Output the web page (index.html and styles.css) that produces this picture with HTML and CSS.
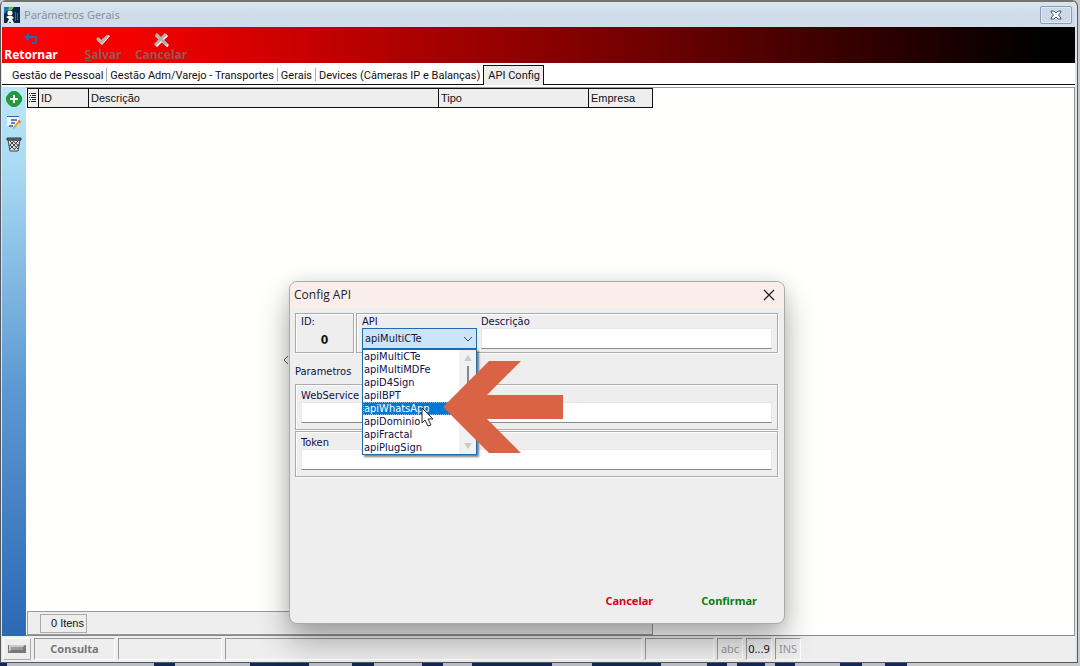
FILE: index.html
```html
<!DOCTYPE html>
<html lang="pt-BR">
<head>
<meta charset="utf-8">
<title>Parâmetros Gerais</title>
<link rel="stylesheet" href="styles.css">
</head>
<body>
<div class="window">
  <header class="titlebar">
    <svg class="app-icon" width="16" height="16" viewBox="0 0 16 16">
      <rect width="16" height="16" fill="#082848"/>
      <path d="M0 0h8l-3 4H3L0 7z" fill="#1f78b8"/>
      <path d="M5 0h5l-2 3H4z" fill="#6cc04a"/>
      <circle cx="6" cy="6" r="2.6" fill="#fff"/>
      <path d="M3 16l2-4-3-2 2-1h4l2 2-2 1 2 4H7l-1-2-1 2z" fill="#fff"/>
      <path d="M11 5h1v9h-1zM13 6h1v7h-1z" fill="#4a6a86"/>
    </svg>
    <h1 class="title">Parâmetros Gerais</h1>
    <button class="win-close" aria-label="Fechar janela">
      <svg width="12" height="10" viewBox="0 0 12 10"><path d="M1 1h3l2 2 2-2h3v1L8.500 5 11 8v1H8L6 7 4 9H1V8l2.500-3L1 2z" fill="#fff" stroke="#4a5264"/></svg>
    </button>
  </header>

  <nav class="toolbar">
    <button class="tool tool-on">
      <svg width="16" height="14" viewBox="0 0 16 14"><path d="M6 0L1 4l5 4V5h6v4H9v2h3l2-2V4l-1-1H6z" fill="#2467b4"/><path d="M2 10h6v1H2z" fill="#b02040"/></svg>
      <span>Retornar</span>
    </button>
    <button class="tool tool-save" disabled>
      <svg width="16" height="14" viewBox="0 0 16 14"><path d="M2 7l2-2 3 3 6-6 2 1-8 9z" fill="#fff"/><path d="M1 6l2-2 3 3 6-5 2 1-7 8z" fill="#b9b4b2"/></svg>
      <span><u>S</u>alvar</span>
    </button>
    <button class="tool" disabled>
      <svg width="16" height="14" viewBox="0 0 16 14"><path d="M3 2l12 11M14 2L3 13" stroke="#fff" stroke-width="3"/><path d="M3 1l11 11M13 1L2 12" stroke="#b5afae" stroke-width="3"/></svg>
      <span>Cancelar</span>
    </button>
  </nav>

  <div class="tabs" role="tablist">
    <button class="tab" role="tab">Gestão de Pessoal</button>
    <button class="tab" role="tab">Gestão Adm/Varejo - Transportes</button>
    <button class="tab" role="tab">Gerais</button>
    <button class="tab" role="tab">Devices (Câmeras IP e Balanças)</button>
    <button class="tab tab-active" role="tab" aria-selected="true">API Config</button>
  </div>

  <main class="workspace">
    <aside class="sidebar">
      <button class="side-btn" aria-label="Adicionar">
        <svg width="16" height="16" viewBox="0 0 16 16"><path d="M6 0h4l3 2 3 4v4l-3 4-3 2H6l-3-2-3-4V6l3-4z" fill="#23983f"/><path d="M8 4v8M4 8h8" stroke="#fff" stroke-width="2"/></svg>
      </button>
      <button class="side-btn" aria-label="Editar">
        <svg width="16" height="16" viewBox="0 0 16 16"><path d="M1 2h12v10H1z" fill="#eef5fb"/><path d="M1 2h12v1H1z" fill="#2c62b0"/><path d="M5 6h6M5 9h4M3 12h4" stroke="#2c62b0" stroke-width="1.500"/><path d="M13 6l2 2-6 6-2 1 0-2z" fill="#f2a52b"/><path d="M13 6l2 2-1 1-2-2z" fill="#e0603a"/></svg>
      </button>
      <button class="side-btn" aria-label="Excluir">
        <svg width="16" height="16" viewBox="0 0 16 16"><path d="M2 3h12l-2 11H4z" fill="#d8dee2" stroke="#444"/><path d="M1 1h14v2H1z" fill="#777" stroke="#333"/><path d="M4 4l8 8M4 8l5 5M7 4l6 5M12 4l-8 8M13 7l-5 6M8 4l-5 5" stroke="#444"/></svg>
      </button>
    </aside>
    <section class="content">
      <table class="grid">
        <colgroup><col class="c-mark"><col class="c-id"><col class="c-desc"><col class="c-type"><col class="c-company"></colgroup>
        <thead><tr>
          <th class="mark"><svg width="9" height="12" viewBox="0 0 9 12"><path d="M1 1.500h1M3 1.500h5M2 3.500h1M4 3.500h4M1 5.500h1M3 5.500h5M2 7.500h1M4 7.500h4M1 9.500h1M3 9.500h5" stroke="#222"/></svg></th>
          <th>ID</th><th>Descrição</th><th>Tipo</th><th>Empresa</th>
        </tr></thead>
      </table>
      <div class="grid-footer"><span class="count">0 Itens</span></div>
    </section>
  </main>

  <footer class="status">
    <span class="cell cell-icon"><svg width="18" height="10" viewBox="0 0 18 10"><path d="M0 1h18v8H0z" fill="#777"/><path d="M1 1h16L15 3H3v3L1 8z" fill="#ccc"/><path d="M3 3h12v3H3z" fill="#999"/></svg></span>
    <span class="cell cell-mode">Consulta</span>
    <span class="cell cell-a"></span>
    <span class="cell cell-b"></span>
    <span class="cell cell-c"></span>
    <span class="cell cell-key">abc</span>
    <span class="cell cell-key key-on">0...9</span>
    <span class="cell cell-key">INS</span>
  </footer>
</div>
<div class="desktop"></div>

<button class="splitter" aria-label="Recolher">
  <svg width="6" height="8" viewBox="0 0 6 8"><path d="M5 0L1 4l4 4" fill="none" stroke="#555"/></svg>
</button>

<form class="dialog" role="dialog" aria-labelledby="dlg-title">
  <header class="dialog-head">
    <h2 class="dialog-title" id="dlg-title">Config API</h2>
    <button type="button" class="dialog-close" aria-label="Fechar"><svg width="12" height="12" viewBox="0 0 12 12"><path d="M1 1l10 10M11 1L1 11" stroke="#222" stroke-width="1.300"/></svg></button>
  </header>
  <div class="dialog-body">
    <div class="row">
      <div class="box id-box"><span>ID:</span><output class="id-value">0</output></div>
      <div class="box api-box">
        <div class="field api-field">
          <label for="api">API</label>
          <select id="api"><option>apiMultiCTe</option></select>
          <svg class="chevron" width="10" height="6" viewBox="0 0 10 6"><path d="M1 1l4 4 4-4" fill="none" stroke="#444"/></svg>
          <div class="dropdown">
            <ul class="options" role="listbox">
              <li>apiMultiCTe</li><li>apiMultiMDFe</li><li>apiD4Sign</li><li>apiIBPT</li>
              <li class="chosen">apiWhatsApp</li><li>apiDominio</li><li>apiFractal</li><li>apiPlugSign</li>
            </ul>
            <div class="scroll"><i class="arrow-up"></i><i class="thumb"></i><i class="arrow-down"></i></div>
          </div>
        </div>
        <div class="field desc-field">
          <label for="desc">Descrição</label>
          <input id="desc" type="text">
        </div>
      </div>
    </div>
    <h3 class="section">Parametros</h3>
    <div class="box field param"><label for="ws">WebService</label><input id="ws" type="text"></div>
    <div class="box field param"><label for="token">Token</label><input id="token" type="text"></div>
  </div>
  <footer class="dialog-foot">
    <button type="button" class="action cancel">Cancelar</button>
    <button type="button" class="action confirm">Confirmar</button>
  </footer>
  <svg class="pointer-arrow" width="120" height="92" viewBox="0 0 120 92"><path d="M0 46L46 0h32L44 34h76v24H44l34 34H46z" fill="#d96445"/></svg>
  <svg class="cursor" width="13" height="20" viewBox="0 0 13 20"><path d="M1 1v15l3-3 3 6 3-1-3-6h5z" fill="#fff" stroke="#222"/></svg>
</form>
</body>
</html>
```

FILE: styles.css
```css
* { box-sizing: border-box; }

body {
  margin: 0;
  height: 100vh;
  display: flex;
  flex-direction: column;
  overflow: hidden;
  position: relative;
  background: #c9cacb;
  font: 11px/13px "Liberation Sans", Arial, sans-serif;
  color: #111;
}

button { font: inherit; border: 0; padding: 0; background: none; color: inherit; }
h1, h2, h3, ul { margin: 0; padding: 0; font-weight: normal; list-style: none; }
svg { display: block; }

.window {
  flex: 1;
  min-height: 0;
  display: flex;
  flex-direction: column;
  margin-right: 2px;
  padding: 0 2px 0 1px;
  border: 1px solid #55585d;
  border-top: 2px solid #73766f;
  border-radius: 6px 6px 0 0;
  background: #dce5ef;
}

.titlebar {
  height: 25px;
  flex: none;
  display: flex;
  align-items: center;
  gap: 4px;
  padding: 1px 3px 0 2px;
  background: linear-gradient(#dce6ee, #cddbea 50%, #d0deeb);
}

.title {
  flex: 1;
  font: 11px/16px "Noto Sans", sans-serif;
  color: #8b929b;
}

.win-close {
  width: 32px;
  height: 18px;
  display: grid;
  place-items: center;
  border: 1px solid #8d9db8;
  border-radius: 2px;
  background: #cbd9ea;
  box-shadow: inset 0 0 0 1px #dde8f4;
}

.toolbar {
  height: 36px;
  flex: none;
  display: flex;
  padding-top: 6px;
  background: linear-gradient(90deg, #f00 0, #f40000 12%, #700000 60%, #000 97%);
}

.tool {
  width: 58px;
  display: flex;
  flex-direction: column;
  align-items: center;
  font: bold 12px/15px "Noto Sans", sans-serif;
  color: #985854;
}
.tool-on { color: #fff; }
.tool-save { margin-left: 14px; }

.tabs {
  flex: none;
  height: 22px;
  display: flex;
  align-items: flex-end;
  padding: 2px 0 0 6px;
  background: #fff;
  box-shadow: inset 0 -1px #111;
  font-family: Roboto, sans-serif;
}

.tab { height: 20px; padding: 0 3px 0 4px; white-space: nowrap; position: relative; }
.tab + .tab::before {
  content: "";
  position: absolute;
  left: 0;
  top: 3px;
  height: 13px;
  border-left: 1px solid #aaa;
}
.tab-active {
  border: 1px solid #111;
  border-bottom: 0;
  background: #eee;
}
.tabs .tab-active::before { display: none; }

.workspace {
  flex: 1;
  min-height: 0;
  display: flex;
  padding-top: 2px;
  background: #fff;
}

.sidebar {
  width: 24px;
  padding: 4px 1px 0 0;
  display: flex;
  flex-direction: column;
  align-items: center;
  gap: 7px;
  background: linear-gradient(#b9e8f7, #a9daf2 15%, #5c98d2 55%, #2c69b5);
}

.content {
  flex: 1;
  display: flex;
  flex-direction: column;
  padding-left: 1px;
  border-top: 1px solid #999;
  border-right: 1px solid #999;
  border-bottom: 1px solid #888;
  background: #fffffe;
}

.grid {
  width: 626px;
  table-layout: fixed;
  border-collapse: collapse;
}
.c-mark { width: 11px; }
.c-id { width: 50px; }
.c-desc { width: 350px; }
.c-type { width: 150px; }
.c-company { width: 64px; }
.grid th {
  height: 19px;
  padding: 1px 2px 0;
  border: 1px solid #111;
  background: #eee;
  text-align: left;
  font-weight: normal;
}
.grid .mark { padding: 0; }

.grid-footer {
  width: 626px;
  margin-top: auto;
  padding: 2px 0 1px 12px;
  border: 1px solid #999;
  background: #eee;
}
.count {
  display: block;
  width: 47px;
  padding: 2px;
  border: 1px solid #aaa;
  text-align: right;
}

.status {
  flex: none;
  height: 26px;
  display: flex;
  gap: 3px;
  padding: 2px 1px;
  background: #eee;
  font: 11px/20px "Noto Sans", sans-serif;
  color: #999;
}
.cell {
  border: 1px solid #fff;
  border-top-color: #999;
  border-left-color: #999;
  text-align: center;
  overflow: hidden;
}
.cell-icon {
  width: 28px;
  display: grid;
  place-items: center;
  border-color: #fff #aaa #aaa #fff;
}
.cell-mode { width: 81px; font-weight: bold; color: #777; }
.cell-a { width: 104px; }
.cell-b { width: 417px; }
.cell-c { width: 69px; }
.cell-key { width: 26px; }
.key-on { color: #111; }

.desktop {
  flex: none;
  height: 3px;
  background: linear-gradient(90deg,
    #12285a 0 7px, #b9bec7 7px 154px, #12285a 154px 175px, #b9bec7 175px 250px,
    #12285a 250px 309px, #b9bec7 309px 352px, #12285a 352px 374px, #b9bec7 374px 422px,
    #12285a 422px 443px, #b9bec7 443px 472px, #12285a 472px 552px, #b9bec7 552px 592px,
    #12285a 592px 661px, #b9bec7 661px 707px, #12285a 707px 727px, #b9bec7 727px 737px,
    #12285a 737px 765px, #b9bec7 765px 775px, #12285a 775px 795px, #b9bec7 795px 840px,
    #12285a 840px 862px, #b9bec7 862px 885px, #12285a 885px 907px, #c9cacb 907px);
}

.splitter { position: absolute; left: 283px; top: 356px; }

.dialog {
  position: absolute;
  left: 289px;
  top: 281px;
  width: 496px;
  min-height: 343px;
  display: flex;
  flex-direction: column;
  border: 1px solid #aaa;
  border-radius: 8px;
  background: #eee;
  box-shadow: 0 18px 32px rgba(0, 0, 0, 0.3), 0 0 16px rgba(0, 0, 0, 0.1);
  font: 11px/13px "DejaVu Sans Condensed", "DejaVu Sans", sans-serif;
  color: #10104a;
}

.dialog-head {
  height: 26px;
  display: flex;
  align-items: center;
  justify-content: space-between;
  padding: 0 9px 0 4px;
  border-radius: 7px 7px 0 0;
  background: #faeeeb;
}
.dialog-title { font: 12px/16px "Open Sans", sans-serif; color: #222; }

.dialog-body { padding: 5px 6px 0 5px; }
.row { display: flex; gap: 2px; }

.box {
  border: 1px solid #aaa;
  box-shadow: inset 1px 1px #fff, 1px 1px #fff;
}
.id-box {
  width: 59px;
  height: 40px;
  padding: 1px 5px;
  display: flex;
  flex-direction: column;
  gap: 6px;
}
.id-value { font-weight: bold; font-size: 12px; text-align: center; color: #111; }

.api-box { flex: 1; display: flex; gap: 4px; padding: 1px 5px 0; }
.field { display: flex; flex-direction: column; }
.field label { align-self: flex-start; }
.api-field { position: relative; width: 115px; }
.desc-field { flex: 1; }

.field input {
  width: 100%;
  height: 21px;
  padding: 0 4px;
  border: 1px solid #e8e8e8;
  border-bottom-color: #888;
  background: #fff;
  font: inherit;
}

.api-field select {
  appearance: none;
  width: 100%;
  height: 21px;
  padding: 0 2px;
  border: 1px solid #1f6bb0;
  border-radius: 0;
  background: #cce4f7;
  font: inherit;
  color: #101838;
}
.chevron { position: absolute; right: 4px; top: 21px; }

.dropdown {
  position: absolute;
  left: 0;
  top: 34px;
  width: 115px;
  display: flex;
  border: 1px solid #1f6bb0;
  background: #fff;
  box-shadow: 2px 2px 2px rgba(0, 0, 0, 0.5);
}
.options { flex: 1; }
.options li { padding-left: 1px; height: 13px; }
.options .chosen { background: #0078d7; color: #fff; outline: 1px dotted #8ab8e0; outline-offset: -1px; }
.scroll {
  width: 17px;
  display: flex;
  flex-direction: column;
  align-items: center;
  padding: 5px 0;
  background: #f1f1f1;
}
.arrow-up, .arrow-down { border: 4px solid transparent; }
.arrow-up { border-top: 0; border-bottom: 6px solid #ccc; }
.arrow-down { border-bottom: 0; border-top: 6px solid #ccc; margin-top: auto; }
.thumb { width: 2px; height: 38px; margin-top: 5px; background: #888; }

.section { padding: 12px 0 6px; font-size: 11px; }
.param { height: 46px; padding: 4px 5px 0; margin-bottom: 1px; }

.dialog-foot {
  margin-top: auto;
  display: flex;
  justify-content: flex-end;
  gap: 48px;
  padding: 0 27px 14px 0;
}
.action { font: bold 11px/16px "Noto Sans", sans-serif; }
.cancel { color: #d9001b; }
.confirm { color: #0a7d12; }

.pointer-arrow { position: absolute; left: 153px; top: 79px; }
.cursor { position: absolute; left: 131px; top: 125px; }
```
